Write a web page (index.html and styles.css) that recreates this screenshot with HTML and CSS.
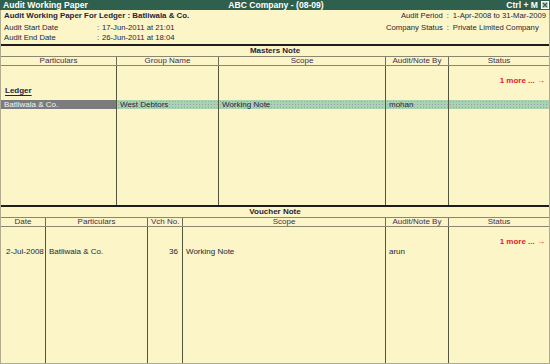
FILE: index.html
```html
<!DOCTYPE html>
<html lang="en">
<head>
  <meta charset="UTF-8">
  <title>Audit Working Paper</title>
  <link rel="stylesheet" href="styles.css">
</head>
<body>
  <div class="window">
    <!-- Title bar -->
    <div class="titlebar">
      <span class="tb-left">Audit Working Paper</span>
      <span class="tb-center">ABC Company - (08-09)</span>
      <span class="tb-right">Ctrl + M
        <svg class="close" width="8" height="8" viewBox="0 0 8 8">
          <rect x="0.5" y="0.5" width="7" height="7" fill="#c8d4cc" stroke="#ffffff"/>
          <path d="M2 2 L6 6 M6 2 L2 6" stroke="#2f5f4d" stroke-width="1.2"/>
        </svg>
      </span>
    </div>

    <!-- Header info -->
    <div class="info">
      <div class="info-left">
        <div class="info-title">Audit Working Paper For Ledger : Batliwala &amp; Co.</div>
        <div class="kv">
          <span>Audit Start Date</span><span>:</span><span>17-Jun-2011 at 21:01</span>
          <span>Audit End Date</span><span>:</span><span>26-Jun-2011 at 18:04</span>
        </div>
      </div>
      <div class="info-right">
        <span>Audit Period</span><span>:</span><span>1-Apr-2008 to 31-Mar-2009</span>
        <span class="gap">Company Status</span><span class="gap">:</span><span class="gap">Private Limited Company</span>
      </div>
    </div>

    <!-- Masters Note -->
    <div class="section masters">
      <div class="section-title">Masters Note</div>
      <div class="row head m-cols">
        <div class="cell">Particulars</div>
        <div class="cell">Group Name</div>
        <div class="cell">Scope</div>
        <div class="cell">Audit/Note By</div>
        <div class="cell">Status</div>
      </div>
      <div class="body">
        <div class="row m-cols h10">
          <div class="cell"></div><div class="cell"></div><div class="cell"></div><div class="cell"></div><div class="cell"></div>
        </div>
        <div class="row m-cols h10">
          <div class="cell"></div><div class="cell"></div><div class="cell"></div><div class="cell"></div>
          <div class="cell more">1 more ... &rarr;</div>
        </div>
        <div class="row m-cols h10">
          <div class="cell ledger"><span>Ledger</span></div><div class="cell"></div><div class="cell"></div><div class="cell"></div><div class="cell"></div>
        </div>
        <div class="row m-cols h4">
          <div class="cell"></div><div class="cell"></div><div class="cell"></div><div class="cell"></div><div class="cell"></div>
        </div>
        <div class="row m-cols h9 selected">
          <div class="cell current">Batliwala &amp; Co.</div>
          <div class="cell">West Debtors</div>
          <div class="cell">Working Note</div>
          <div class="cell">mohan</div>
          <div class="cell"></div>
        </div>
        <div class="row m-cols fill">
          <div class="cell"></div><div class="cell"></div><div class="cell"></div><div class="cell"></div><div class="cell"></div>
        </div>
      </div>
    </div>

    <!-- Voucher Note -->
    <div class="section vouchers">
      <div class="section-title">Voucher Note</div>
      <div class="row head v-cols">
        <div class="cell">Date</div>
        <div class="cell">Particulars</div>
        <div class="cell">Vch No.</div>
        <div class="cell">Scope</div>
        <div class="cell">Audit/Note By</div>
        <div class="cell">Status</div>
      </div>
      <div class="body">
        <div class="row v-cols h10">
          <div class="cell"></div><div class="cell"></div><div class="cell"></div><div class="cell"></div><div class="cell"></div><div class="cell"></div>
        </div>
        <div class="row v-cols h10">
          <div class="cell"></div><div class="cell"></div><div class="cell"></div><div class="cell"></div><div class="cell"></div>
          <div class="cell more">1 more ... &rarr;</div>
        </div>
        <div class="row v-cols h9">
          <div class="cell date">2-Jul-2008</div>
          <div class="cell">Batliwala &amp; Co.</div>
          <div class="cell num">36</div>
          <div class="cell">Working Note</div>
          <div class="cell">arun</div>
          <div class="cell"></div>
        </div>
        <div class="row v-cols fill">
          <div class="cell"></div><div class="cell"></div><div class="cell"></div><div class="cell"></div><div class="cell"></div><div class="cell"></div>
        </div>
      </div>
    </div>
  </div>
</body>
</html>
```

FILE: styles.css
```css
body { margin: 0; background: #fbf5c7; font-family: "Liberation Sans", Arial, sans-serif; font-size: 8px; color: #26263a; }
.window { height: 364px; display: flex; flex-direction: column; border: 1px solid #b0ab8c; border-top: none; box-sizing: border-box; }

/* title bar */
.titlebar { display: grid; grid-template-columns: 1fr auto 1fr; height: 10px; line-height: 10px; background: #2f5f4d; color: #fff; font-weight: bold; font-size: 8.6px; padding: 0 1px 0 3px; margin: 0 -1px; }
.tb-right { justify-self: end; display: flex; align-items: center; gap: 3px; }
.close { display: block; }

/* header info */
.info { display: flex; justify-content: space-between; padding: 1px 3px 1px 3px; height: 34px; box-sizing: border-box; line-height: 10px; font-size: 7.7px; }
.info-title { font-weight: bold; font-size: 7.9px; margin-bottom: 2px; }
.kv { display: grid; grid-template-columns: 93px 5px auto; }
.info-right { display: grid; grid-template-columns: auto 10px auto; grid-template-rows: 10px 10px; row-gap: 2px; align-content: start; }
.info-right span:nth-child(3n+1) { text-align: right; }
.info-right span:nth-child(3n+2) { text-align: center; }

/* sections */
.section { display: flex; flex-direction: column; border-top: 2px solid #1e1e1e; }
.masters { height: 159px; }
.vouchers { flex: 1; }
.section-title { height: 10px; line-height: 10px; text-align: center; font-weight: bold; border-bottom: 1px solid #8a8670; }
.body { flex: 1; display: flex; flex-direction: column; }

.row { display: grid; }
.m-cols { grid-template-columns: 116px 102px 167px 63px 1fr; }
.v-cols { grid-template-columns: 45px 102px 35px 203px 63px 1fr; }
.cell { border-right: 1px solid #55543f; padding: 0 3px; white-space: nowrap; overflow: hidden; }
.cell:last-child { border-right: none; }

.head { height: 9px; line-height: 8px; border-bottom: 1px solid #8a8670; box-sizing: border-box; }
.head .cell { text-align: center; color: #3e3050; border-right-color: #6e6c58; }

.h10 { height: 10px; line-height: 10px; }
.h9 { height: 9px; line-height: 9px; }
.h4 { height: 4px; }
.fill { flex: 1; }

.more { color: #e8202c; font-weight: bold; text-align: right; padding-right: 4px; }
.ledger { font-weight: bold; padding-left: 4px; }
.ledger span { text-decoration: underline; text-underline-offset: 2px; }
.num { text-align: right; padding-right: 4px; }
.date { padding-left: 5px; }

.selected .cell { background-color: #aad2b0; background-image: radial-gradient(circle, #86aab8 0.6px, transparent 0.8px); background-size: 3px 3px; }
.selected .cell.current { background: #7c7c7c; color: #f4f4f4; }
```
